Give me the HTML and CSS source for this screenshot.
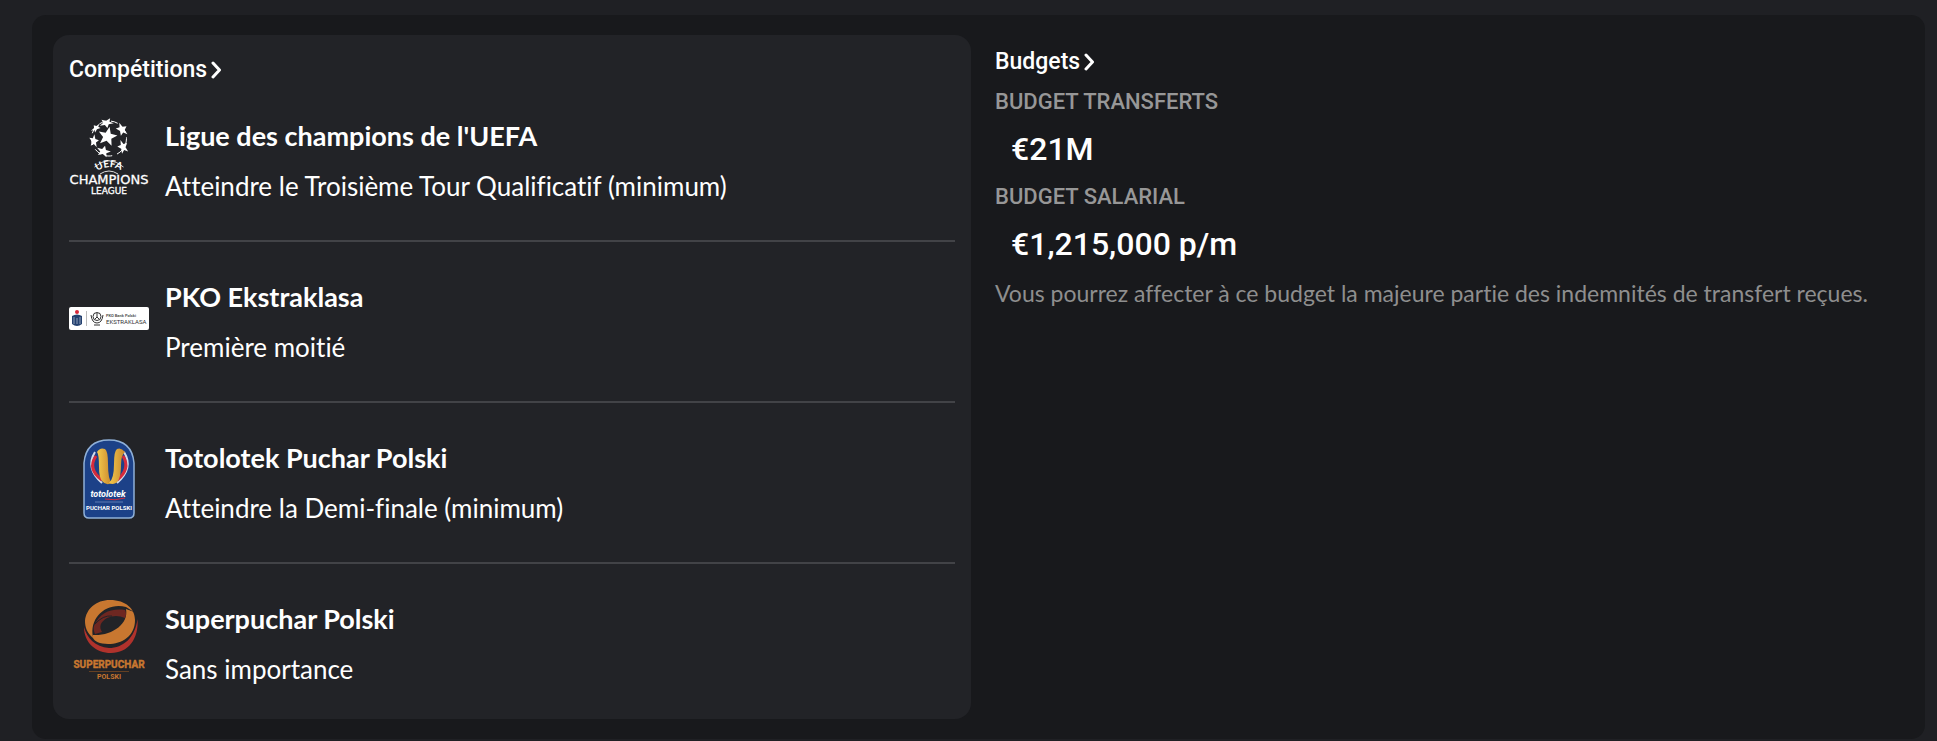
FILE: index.html
```
<!DOCTYPE html>
<html lang="fr">
<head>
    <meta charset="UTF-8">
    <title>Compétitions et budgets</title>
    <link rel="stylesheet" href="styles.css">
</head>
<body>
    <main class="board">
        <section class="panel competitions">
            <h2><a href="#competitions">Compétitions<svg class="chevron" viewBox="0 0 11 18"><path d="M2 2l6.500 7-6.500 7"/></svg></a></h2>
            <ul class="list">
                <li class="item">
                    <svg class="logo" viewBox="0 0 80 80">
                        <defs>
                            <path id="star" d="M0-10L2.600-3.400 9.500-3.100 4.200 1.400 5.900 8.100 0 4.400-5.900 8.100-4.200 1.400-9.500-3.100-2.600-3.400z"/>
                            <path id="arc" d="M28 54Q40 46 54 54.500"/>
                        </defs>
                        <g fill="#fff">
                            <use href="#star" transform="translate(38.500 19.500) rotate(12)"/>
                            <use href="#star" transform="translate(37.500 6) rotate(170) scale(.75 .5)"/>
                            <use href="#star" transform="translate(53 12.500) rotate(55) scale(.75 .55)"/>
                            <use href="#star" transform="translate(54 30) rotate(-20) scale(.55 .75)"/>
                            <use href="#star" transform="translate(34.500 34.500) rotate(15) scale(.75 .6)"/>
                            <use href="#star" transform="translate(25 24) rotate(80) scale(.7 .5)"/>
                            <use href="#star" transform="translate(27 11) rotate(-40) scale(.6 .35)"/>
                        </g>
                        <circle cx="40" cy="21.500" r="17.500" fill="none" stroke="#fff" stroke-dasharray="7 5"/>
                        <path d="M25.500 50Q40 37.500 54.500 50M31 57Q40 51 49 57" fill="none" stroke="#ddd"/>
                        <text class="uefa"><textPath href="#arc">UEFA</textPath></text>
                        <text class="champions" x="40" y="67">CHAMPIONS</text>
                        <text class="league" x="40" y="77">LEAGUE</text>
                    </svg>
                    <div class="text">
                        <h3>Ligue des champions de l'UEFA</h3>
                        <p>Atteindre le Troisième Tour Qualificatif (minimum)</p>
                    </div>
                </li>
                <li class="item">
                    <svg class="logo" viewBox="0 0 80 80">
                        <rect y="29" width="80" height="23" rx="2" fill="#fff"/>
                        <circle cx="8" cy="34" r="2" fill="#d8283a"/>
                        <path d="M3 38q5-3 10 0v8q-5 4-10 0z" fill="#23406f"/>
                        <path d="M5 39v7M8 40v6M11 39v7" stroke="#a9b6ca" stroke-width=".8"/>
                        <path d="M17.500 33v15" stroke="#aaa" stroke-width=".8"/>
                        <g fill="none" stroke="#333">
                            <circle cx="28" cy="38.500" r="4"/>
                            <path d="M22 37q1 8 6 8t6-8M25 47h6M28 35v4M26 41l2-2 2 2"/>
                        </g>
                        <text class="pko" x="37" y="39">PKO Bank Polski</text>
                        <text class="ekstra" x="37" y="46">EKSTRAKLASA</text>
                    </svg>
                    <div class="text">
                        <h3>PKO Ekstraklasa</h3>
                        <p>Première moitié</p>
                    </div>
                </li>
                <li class="item">
                    <svg class="logo" viewBox="0 0 80 80">
                        <defs>
                            <linearGradient id="gold" x1="0" x2="1">
                                <stop offset="0" stop-color="#f5ca4c"/>
                                <stop offset="1" stop-color="#c8872d"/>
                            </linearGradient>
                        </defs>
                        <path d="M15 24Q17 1 40 1t25 23v50q0 5-5 5H20q-5 0-5-5z" fill="#1c4188" stroke="#8fb0d8" stroke-width="1.500"/>
                        <g fill="none" stroke-width="3">
                            <path d="M26 13Q16 29 33 44" stroke="#d3dbea" stroke-width="2"/>
                            <path d="M27 17Q18 30 33 41" stroke="#d52b3c"/>
                            <path d="M55 13Q65 29 48 44" stroke="#d3dbea" stroke-width="2"/>
                            <path d="M54 17Q62 30 48 41" stroke="#d52b3c"/>
                        </g>
                        <path d="M28 13q3-5 8-3 3 2 3 15 0 16 4 19-6 3-10-2-3-4-3-14 0-13-2-15z" fill="url(#gold)"/>
                        <path d="M56 13q-4-5-8-3-3 2-3 15 0 15-5 19 7 3 10-4 2-5 2-14 0-10 4-13z" fill="url(#gold)"/>
                        <text class="totolotek" x="39" y="58">totolotek</text>
                        <path d="M36 60q10 2 20-1" fill="none" stroke="#d52b3c"/>
                        <path d="M26 63h28" stroke="#6f8bc0" stroke-width=".8"/>
                        <text class="puchar" x="40" y="71">PUCHAR POLSKI</text>
                    </svg>
                    <div class="text">
                        <h3>Totolotek Puchar Polski</h3>
                        <p>Atteindre la Demi-finale (minimum)</p>
                    </div>
                </li>
                <li class="item">
                    <svg class="logo" viewBox="0 0 80 80">
                        <path d="M15 27C15 43 27 53 42 53 59 53 70 39 68.500 19 66 38 54 48 40 48 26 47 18 38 15 27z" fill="#b0322c"/>
                        <path d="M41 0C57 0 66 9 66 20 66 36 53 44 39 44 31 44 25 41 24 38 18 33 16 27 16 21 17 9 27 0 41 0z" fill="#c87730"/>
                        <path d="M24 37C20 18 37 2 57 7L65 12 57 9C60 24 43 36 24 35z" fill="#222327"/>
                        <path d="M25 26C31 12 43 8 56 10Q58 14 56 18 47 14 38 18 28 24 33 32L26 34Q24 29 25 26z" fill="#6e2721"/>
                        <path d="M26 24Q34 15 43 16" fill="none" stroke="#222327"/>
                        <text class="super" x="40" y="68">SUPERPUCHAR</text>
                        <path d="M20 71.500h40" stroke="#754822" stroke-width=".8"/>
                        <text class="polski" x="40" y="79">POLSKI</text>
                    </svg>
                    <div class="text">
                        <h3>Superpuchar Polski</h3>
                        <p>Sans importance</p>
                    </div>
                </li>
            </ul>
        </section>
        <section class="budgets">
            <h2><a href="#budgets">Budgets<svg class="chevron" viewBox="0 0 11 18"><path d="M2 2l6.500 7-6.500 7"/></svg></a></h2>
            <dl>
                <dt>BUDGET TRANSFERTS</dt>
                <dd>€21M</dd>
                <dt>BUDGET SALARIAL</dt>
                <dd>€1,215,000 p/m</dd>
            </dl>
            <p class="note">Vous pourrez affecter à ce budget la majeure partie des indemnités de transfert reçues.</p>
        </section>
    </main>
</body>
</html>
```
FILE: styles.css
```
* {
    box-sizing: border-box;
    margin: 0;
    padding: 0;
}
body {
    padding: 15px 12px 2px 32px;
    background: #1f2024;
    color: #fff;
    font-family: Lato, "Open Sans", sans-serif;
    font-variant-ligatures: none;
}
.board {
    display: grid;
    grid-template-columns: 1fr 1fr;
    gap: 16px;
    padding: 20px 20px 20px 21px;
    border-radius: 14px;
    background: #18191c;
}
.panel {
    padding: 22px 16px 25px;
    border-radius: 16px;
    background: #222327;
}
h2 {
    font-family: Roboto, sans-serif;
    font-size: 23px;
    font-weight: 500;
    line-height: 25px;
}
h2 a {
    display: inline-flex;
    align-items: center;
    gap: 4px;
    color: #fff;
    text-decoration: none;
}
.chevron {
    width: 11px;
    height: 18px;
    fill: none;
    stroke: #fff;
    stroke-width: 3;
    stroke-linecap: round;
    stroke-linejoin: round;
}
.list {
    list-style: none;
}
.item {
    display: flex;
    align-items: flex-start;
    gap: 16px;
    padding: 30px 0 29px;
    border-bottom: 2px solid #424347;
}
.item:first-child {
    padding-top: 29px;
}
.item:last-child {
    padding-bottom: 0;
    border-bottom: 0;
}
.logo {
    flex: none;
    width: 80px;
    height: 80px;
    margin-top: 6px;
    overflow: visible;
}
.text {
    font-size: 26px;
    line-height: 50px;
}
.text h3 {
    font-size: 27px;
    font-weight: 700;
}
.budgets {
    padding: 7px 8px;
}
.budgets h2 {
    line-height: 40px;
}
dt {
    color: #979797;
    font-family: Roboto, sans-serif;
    font-size: 22px;
    font-weight: 500;
    line-height: 40px;
}
dd {
    padding-left: 16px;
    font-family: Roboto, sans-serif;
    font-size: 32px;
    font-weight: 500;
    line-height: 55px;
}
.note {
    color: #8e8e8e;
    font-size: 23px;
    line-height: 42px;
}

/* logos */
.logo text {
    fill: #fff;
    text-anchor: middle;
    font-family: Roboto, sans-serif;
    font-weight: 700;
}
.logo .uefa {
    font: 700 10px Lato, sans-serif;
    text-anchor: start;
}
.logo .champions {
    font: 13px "DejaVu Sans", sans-serif;
    stroke: #fff;
    stroke-width: .3;
}
.logo .league {
    font: 9px "DejaVu Sans", sans-serif;
    stroke: #fff;
    stroke-width: .3;
}
.logo .pko {
    fill: #555;
    font-size: 4px;
    text-anchor: start;
}
.logo .ekstra {
    fill: #333;
    font-size: 6px;
    font-weight: 400;
    text-anchor: start;
}
.logo .totolotek {
    font-size: 9px;
    font-style: italic;
}
.logo .puchar {
    font-size: 6px;
}
.logo .super {
    fill: #c87730;
    stroke: #c87730;
    stroke-width: .4;
    font-size: 10px;
}
.logo .polski {
    fill: #c87730;
    font-size: 7px;
}
```
